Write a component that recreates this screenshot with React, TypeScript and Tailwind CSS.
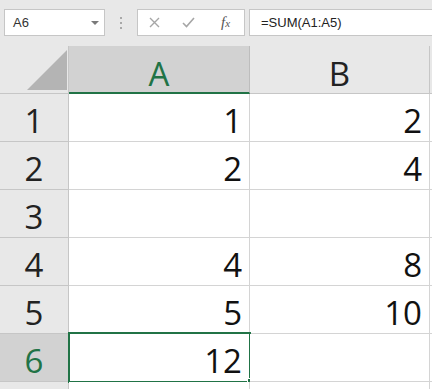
import type { ReactNode } from 'react';

const rows: { n: number; a: string; b: string }[] = [
  { n: 1, a: '1', b: '2' },
  { n: 2, a: '2', b: '4' },
  { n: 3, a: '', b: '' },
  { n: 4, a: '4', b: '8' },
  { n: 5, a: '5', b: '10' },
  { n: 6, a: '12', b: '' },
  { n: 7, a: '', b: '' }
];

function Cell({ children, className }: { children?: ReactNode; className: string }) {
  return (
    <div
      className={`relative flex h-full items-end justify-end border-r border-[#d4d4d4] pb-[4px] pr-[7px] leading-none ${className}`}
    >
      {children}
    </div>
  );
}

export default function App() {
  return (
    <div className="h-[389px] w-[432px] overflow-hidden bg-[#e8e8e8] font-['Open_Sans','Liberation_Sans',sans-serif] text-[#111]">
      {/* formula bar */}
      <div className="flex h-[46px] items-start pl-[4px] pt-[9px] font-['Liberation_Sans',sans-serif] text-[13px]">
        <div className="flex h-[27px] w-[101px] items-center justify-between border border-[#c6c6c6] bg-white pl-[8px] pr-[5px] text-[#333]">
          <span>A6</span>
          <svg width="8" height="4" viewBox="0 0 8 4">
            <path d="M0 0h8L4 4z" fill="#7a7a7a" />
          </svg>
        </div>
        <div className="flex h-[27px] w-[32px] flex-col items-center justify-center gap-[3px]">
          <span className="h-[2px] w-[2px] bg-[#a8a8a8]" />
          <span className="h-[2px] w-[2px] bg-[#a8a8a8]" />
          <span className="h-[2px] w-[2px] bg-[#a8a8a8]" />
        </div>
        <div className="flex h-[27px] w-[108px] items-center border border-[#c6c6c6] bg-white">
          <div className="flex w-[32px] justify-center">
            <svg width="11" height="11" viewBox="0 0 11 11">
              <path d="M1 1l9 9M10 1l-9 9" stroke="#a6a6a6" strokeWidth="1.4" />
            </svg>
          </div>
          <div className="flex w-[37px] justify-center">
            <svg width="13" height="11" viewBox="0 0 13 11">
              <path d="M1 6l3.5 3.5L12 1" stroke="#a6a6a6" strokeWidth="1.6" fill="none" />
            </svg>
          </div>
          <div className="flex w-[37px] items-baseline justify-center font-['Liberation_Serif',serif] text-[15px] italic leading-none text-[#555]">
            f<span className="text-[11px]">x</span>
          </div>
        </div>
        <div className="ml-[4px] flex h-[27px] flex-1 items-center border border-r-0 border-[#c6c6c6] bg-white pl-[11px] text-[#222]">
          =SUM(A1:A5)
        </div>
      </div>

      {/* sheet */}
      <div className="flex flex-col text-[33px]">
        <div className="flex h-[48px]">
          <div className="relative h-full w-[69px] border-b border-r border-[#c6c6c6]">
            <svg className="absolute left-[27px] top-[4px]" width="40" height="40" viewBox="0 0 40 40">
              <path d="M40 0V40H0z" fill="#b4b4b4" />
            </svg>
          </div>
          <div className="flex h-full w-[181px] items-end justify-center border-b-2 border-r border-b-[#217346] border-r-[#bdbdbd] bg-[#d2d2d2] pb-[2px] leading-none text-[#217346]">
            A
          </div>
          <div className="flex h-full w-[180px] items-end justify-center border-b border-r border-[#c6c6c6] pb-[3px] leading-none text-[#222]">
            B
          </div>
          <div className="h-full flex-1 border-b border-[#c6c6c6]" />
        </div>

        {rows.map((row) => {
          const selected = row.n === 6;
          return (
            <div key={row.n} className="flex h-[48px] shrink-0">
              <div
                className={`flex h-full w-[69px] items-end justify-center border-b border-r border-[#c6c6c6] pb-[4px] leading-none ${
                  selected ? 'bg-[#d2d2d2] text-[#217346]' : 'text-[#222]'
                }`}
              >
                {row.n < 7 ? row.n : ''}
              </div>
              <Cell className="w-[181px] border-b bg-white">
                {row.a}
                {selected ? (
                  <>
                    <div className="pointer-events-none absolute -left-[1px] -top-[2px] h-[51px] w-[183px] border-2 border-[#217346]" />
                    <div className="absolute -bottom-[3px] -right-[4px] h-[6px] w-[6px] border border-white bg-[#217346]" />
                  </>
                ) : null}
              </Cell>
              <Cell className="w-[180px] border-b bg-white">{row.b}</Cell>
              <div className="h-full flex-1 border-b border-[#d4d4d4] bg-white" />
            </div>
          );
        })}
      </div>
    </div>
  );
}
